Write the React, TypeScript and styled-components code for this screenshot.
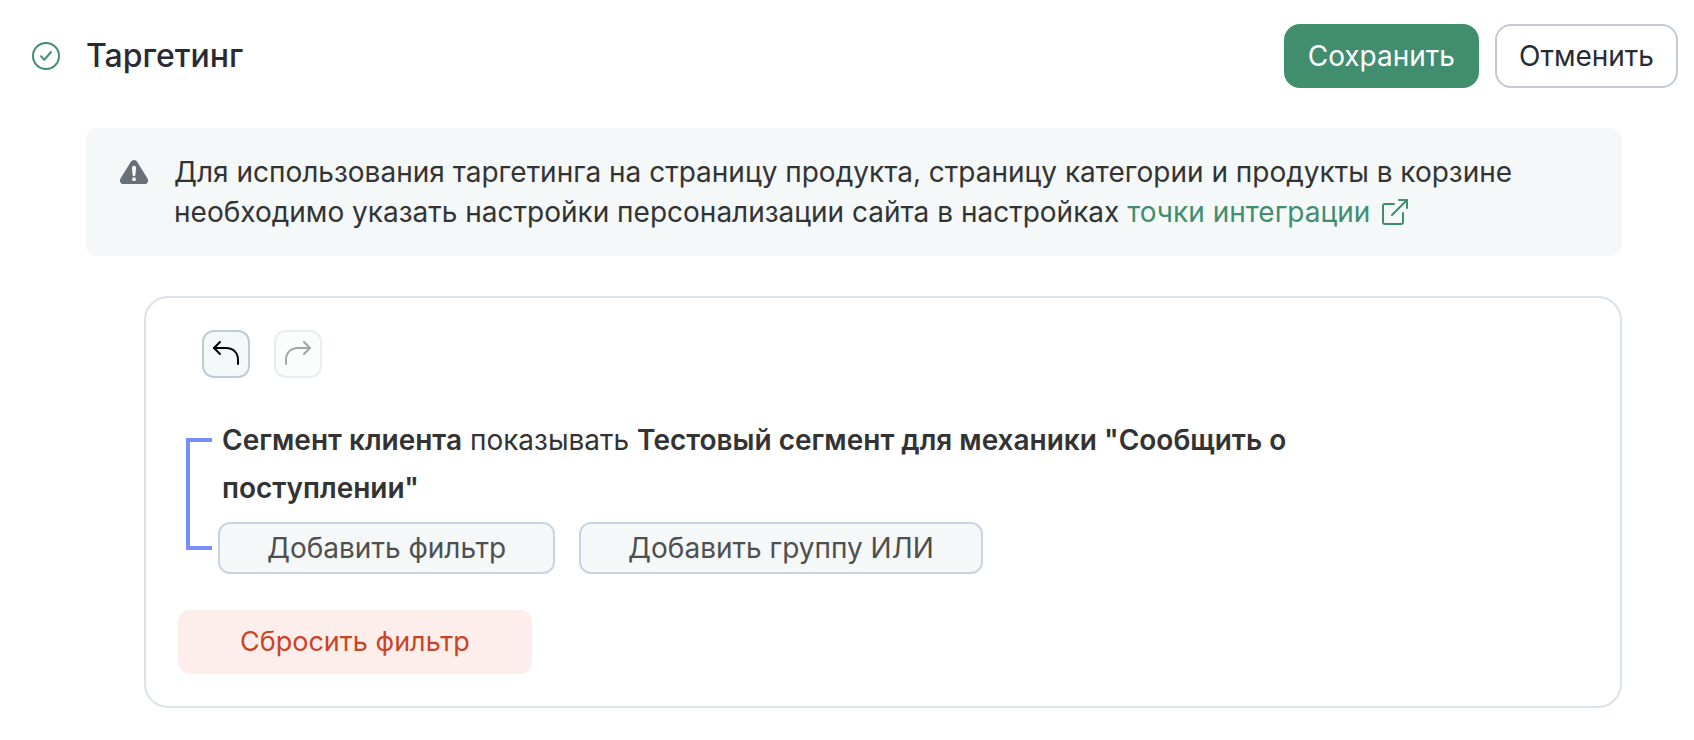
import React from "react";
import styled, { createGlobalStyle, css } from "styled-components";

const GlobalStyle = createGlobalStyle`
  *, *::before, *::after { box-sizing: border-box; }
  body {
    margin: 0;
    background: #ffffff;
    color: #333333;
    font-family: Inter, "Liberation Sans", sans-serif;
    font-size: 28px;
    line-height: 40px;
  }
  button { font: inherit; margin: 0; cursor: pointer; }
`;

const Page = styled.main`
  padding: 24px 16px 32px 32px;
`;

const Header = styled.header`
  display: flex;
  align-items: center;
  justify-content: space-between;
  gap: 24px;
`;

const Heading = styled.div`
  display: flex;
  align-items: center;
  gap: 26px;
`;

const Title = styled.h1`
  margin: 0;
  color: #2a2a33;
  font-size: 32px;
  line-height: 40px;
  font-weight: 500;
`;

const Actions = styled.div`
  display: flex;
  gap: 16px;
`;

const ActionButton = styled.button<{ $primary?: boolean }>`
  height: 64px;
  padding: 0 22px;
  border: 2px solid #c0ccd4;
  border-radius: 16px;
  background: #ffffff;
  color: #2a2a33;
  ${({ $primary }) =>
    $primary &&
    css`
      border-color: #418e6e;
      background: #418e6e;
      color: #ffffff;
    `}
`;

const Content = styled.div`
  display: flex;
  flex-direction: column;
  gap: 40px;
  margin: 40px 56px 0 54px;
`;

const Notice = styled.section`
  display: flex;
  align-items: flex-start;
  gap: 26px;
  padding: 24px 34px;
  border-radius: 12px;
  background: #f4f8f9;

  > svg { flex: none; margin-top: 8px; }
`;

const NoticeText = styled.p`
  margin: 0;
`;

const NoticeLink = styled.a`
  color: #418e6e;
  text-decoration: none;

  svg { margin-left: 12px; vertical-align: -3px; }
`;

const Card = styled.section`
  display: flex;
  flex-direction: column;
  align-items: flex-start;
  margin-left: 58px;
  padding: 32px;
  border: 2px solid #dbe2e8;
  border-radius: 24px;
`;

const History = styled.div`
  display: flex;
  gap: 24px;
  margin-left: 24px;
`;

const HistoryButton = styled.button`
  display: grid;
  place-items: center;
  width: 48px;
  height: 48px;
  padding: 0;
  border: 2px solid #c0ccd4;
  border-radius: 12px;
  background: #f4f8f9;
  color: #000000;

  &:disabled { opacity: 0.35; cursor: default; }
`;

const FilterGroup = styled.div`
  display: flex;
  gap: 6px;
  margin: 38px 0 36px 8px;
`;

const Bracket = styled.div`
  flex: none;
  width: 26px;
  margin: 22px 0 24px;
  border: 4px solid #7590f8;
  border-right: 0;
`;

const Filters = styled.div`
  display: flex;
  flex-direction: column;
  gap: 10px;
`;

const Condition = styled.p`
  max-width: 1120px;
  margin: 0;
  padding-left: 4px;
  line-height: 48px;

  strong { font-weight: 600; }
`;

const FilterActions = styled.div`
  display: flex;
  flex-wrap: wrap;
  gap: 24px;
`;

const FilterButton = styled.button`
  height: 52px;
  padding: 0 47px;
  border: 2px solid #c8d5e1;
  border-radius: 12px;
  background: #f4f8f9;
  color: #4f4f4f;
`;

const ResetButton = styled.button`
  height: 64px;
  padding: 0 62px;
  border: 0;
  border-radius: 12px;
  background: #fdeeeb;
  color: #cb4424;
  font-size: 27px;
`;

const CheckIcon = () => (
  <svg width="28" height="28" viewBox="0 0 28 28" fill="none" stroke="#418e6e" strokeWidth="2" aria-hidden="true">
    <circle cx="14" cy="14" r="13" />
    <path d="M9 14.2l3.2 3.6 6.8-7.8" strokeLinecap="round" strokeLinejoin="round" />
  </svg>
);

const WarningIcon = () => (
  <svg width="28" height="24" viewBox="0 0 28 24" aria-hidden="true">
    <path d="M10.7 1.9a3.9 3.9 0 0 1 6.6 0l10.2 16.6c1.4 2.4.2 5.5-2.8 5.5H3.3c-3 0-4.2-3.1-2.8-5.5z" fill="#68717a" />
    <path d="M12 7.5a2 1.7 0 0 1 4 0l-.6 7.3a1.4 1.4 0 0 1-2.8 0z" fill="#ffffff" />
    <circle cx="14" cy="19.2" r="1.9" fill="#ffffff" />
  </svg>
);

const ExternalIcon = () => (
  <svg width="26" height="26" viewBox="0 0 26 26" fill="none" stroke="currentColor" strokeWidth="2" strokeLinecap="round" strokeLinejoin="round" aria-hidden="true">
    <path d="M12 5H3a2 2 0 0 0-2 2v16a2 2 0 0 0 2 2h16a2 2 0 0 0 2-2V14" />
    <path d="M17 1h8v8M25 1L10 16" />
  </svg>
);

const UndoIcon = () => (
  <svg width="28" height="28" viewBox="0 0 28 28" fill="none" stroke="currentColor" strokeWidth="2" strokeLinecap="round" strokeLinejoin="round" aria-hidden="true">
    <path d="M8 2L2 8l6 6" />
    <path d="M2 8h12C21.5 8 26 13 26 20v4" />
  </svg>
);

const RedoIcon = () => (
  <svg width="28" height="28" viewBox="0 0 28 28" fill="none" stroke="currentColor" strokeWidth="2" strokeLinecap="round" strokeLinejoin="round" aria-hidden="true">
    <path d="M20 2l6 6-6 6" />
    <path d="M26 8H14C6.500 8 2 13 2 20v4" />
  </svg>
);

export default function App() {
  return (
    <>
      <GlobalStyle />
      <Page>
        <Header>
          <Heading>
            <CheckIcon />
            <Title>Таргетинг</Title>
          </Heading>
          <Actions>
            <ActionButton type="button" $primary>Сохранить</ActionButton>
            <ActionButton type="button">Отменить</ActionButton>
          </Actions>
        </Header>
        <Content>
          <Notice>
            <WarningIcon />
            <NoticeText>
              Для использования таргетинга на страницу продукта, страницу категории и продукты в корзине
              необходимо указать настройки персонализации сайта в настройках{" "}
              <NoticeLink href="#integration">
                точки интеграции
                <ExternalIcon />
              </NoticeLink>
            </NoticeText>
          </Notice>
          <Card>
            <History>
              <HistoryButton type="button" aria-label="Отменить действие"><UndoIcon /></HistoryButton>
              <HistoryButton type="button" aria-label="Повторить действие" disabled><RedoIcon /></HistoryButton>
            </History>
            <FilterGroup>
              <Bracket />
              <Filters>
                <Condition>
                  <strong>Сегмент клиента</strong> показывать{" "}
                  <strong>Тестовый сегмент для механики "Сообщить о поступлении"</strong>
                </Condition>
                <FilterActions>
                  <FilterButton type="button">Добавить фильтр</FilterButton>
                  <FilterButton type="button">Добавить группу ИЛИ</FilterButton>
                </FilterActions>
              </Filters>
            </FilterGroup>
            <ResetButton type="button">Сбросить фильтр</ResetButton>
          </Card>
        </Content>
      </Page>
    </>
  );
}
